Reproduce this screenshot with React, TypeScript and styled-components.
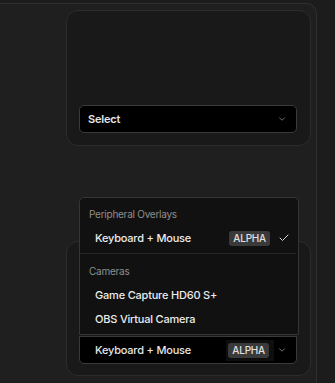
import React from "react";
import styled, { createGlobalStyle } from "styled-components";

const GlobalStyle = createGlobalStyle`
  html, body {
    margin: 0;
    padding: 0;
    background: #1c1c1c;
    font-family: Inter, "Noto Sans", sans-serif;
    -webkit-font-smoothing: antialiased;
  }
`;

interface Option {
  id: string;
  label: string;
  alpha?: boolean;
}

interface Group {
  title: string;
  options: Option[];
}

const groups: Group[] = [
  { title: "Peripheral Overlays", options: [{ id: "km", label: "Keyboard + Mouse", alpha: true }] },
  {
    title: "Cameras",
    options: [
      { id: "hd60", label: "Game Capture HD60 S+" },
      { id: "obs", label: "OBS Virtual Camera" },
    ],
  },
];

function Chevron() {
  return (
    <svg width="10" height="10" viewBox="0 0 24 24" fill="none" stroke="#858585" strokeWidth="2" strokeLinecap="round" strokeLinejoin="round">
      <path d="m6 9 6 6 6-6" />
    </svg>
  );
}

function Check() {
  return (
    <svg width="12" height="12" viewBox="0 0 24 24" fill="none" stroke="#d8d8d8" strokeWidth="2" strokeLinecap="round" strokeLinejoin="round">
      <path d="M20 6 9 17l-5-5" />
    </svg>
  );
}

function SourceMenu({ selected }: { selected: string }) {
  return (
    <Menu>
      {groups.map((group, i) => (
        <React.Fragment key={group.title}>
          {i > 0 && <Separator />}
          <GroupLabel>{group.title}</GroupLabel>
          {group.options.map(option => (
            <Item key={option.id}>
              <ItemText>{option.label}</ItemText>
              {option.alpha && <Badge>ALPHA</Badge>}
              <CheckSlot>{option.id === selected && <Check />}</CheckSlot>
            </Item>
          ))}
        </React.Fragment>
      ))}
    </Menu>
  );
}

function App() {
  return (
    <>
      <GlobalStyle />
      <Page>
        <Panel>
          <Card>
            <Trigger isPlaceholder>
              <TriggerText isPlaceholder>Select</TriggerText>
              <Chevron />
            </Trigger>
          </Card>
          <Card>
            <Anchor>
              <SourceMenu selected="km" />
              <Trigger>
                <TriggerText>Keyboard + Mouse</TriggerText>
                <BadgeWrap>
                  <Badge>ALPHA</Badge>
                </BadgeWrap>
                <Chevron />
              </Trigger>
            </Anchor>
          </Card>
        </Panel>
      </Page>
    </>
  );
}

const Page = styled.div`
  height: 383px;
  overflow: hidden;
  padding-top: 3px;
  box-sizing: border-box;
`;

const Panel = styled.div`
  margin-left: -20px;
  width: 337px;
  height: 420px;
  box-sizing: border-box;
  padding: 6px 5px 0 85px;
  background: #1f1f1f;
  border: 1px solid #2f2f2f;
  border-radius: 10px;
  display: flex;
  flex-direction: column;
  gap: 95px;
`;

const Card = styled.div`
  height: 136px;
  box-sizing: border-box;
  padding: 0 13px 12px 12px;
  background: #191919;
  border: 1px solid #2c2c2c;
  border-radius: 12px;
  display: flex;
  flex-direction: column;
  justify-content: flex-end;

  & + & {
    height: 135px;
    padding-bottom: 11px;
  }
`;

const Anchor = styled.div`
  position: relative;
`;

const Trigger = styled.div<{ isPlaceholder?: boolean }>`
  height: 28px;
  box-sizing: border-box;
  display: flex;
  align-items: center;
  padding: 0 9px 0 ${props => (props.isPlaceholder ? "8px" : "15px")};
  background: #000;
  border: 1px solid #3a3a3a;
  border-radius: ${props => (props.isPlaceholder ? "5px" : "0 0 5px 5px")};
  color: #e6e6e6;
`;

const TriggerText = styled.span<{ isPlaceholder?: boolean }>`
  flex: 1;
  font-size: 11px;
  font-weight: ${props => (props.isPlaceholder ? 600 : 500)};
  letter-spacing: -0.2px;
`;

const BadgeWrap = styled.div`
  display: flex;
  align-items: center;
  height: 21px;
  padding: 0 5px 0 2px;
  margin-right: 3px;
  background: #0e0e0e;
`;

const Menu = styled.div`
  position: absolute;
  left: 0;
  right: -2px;
  bottom: calc(100% + 1px);
  box-sizing: border-box;
  padding: 4px 0 3px;
  background: #111111;
  border: 1px solid #353535;
  border-radius: 5px 5px 0 0;
`;

const GroupLabel = styled.div`
  height: 24px;
  display: flex;
  align-items: center;
  padding-left: 9px;
  color: #8f8f8f;
  font-size: 10px;
  letter-spacing: -0.25px;
`;

const Item = styled.div`
  height: 24px;
  display: flex;
  align-items: center;
  padding: 0 7px 0 15px;
  color: #ececec;
`;

const ItemText = styled.span`
  flex: 1;
  font-size: 11px;
  font-weight: 500;
  letter-spacing: -0.2px;
`;

const CheckSlot = styled.div`
  width: 14px;
  margin-left: 7px;
  display: flex;
  justify-content: center;
`;

const Badge = styled.span`
  display: inline-flex;
  align-items: center;
  height: 15px;
  padding: 0 4px;
  border-radius: 3px;
  background: #3a3a3a;
  color: #e0e0e0;
  font-size: 10px;
  font-weight: 500;
  letter-spacing: -0.2px;
`;

const Separator = styled.div`
  height: 1px;
  margin: 3px 2px 5px 0;
  background: #262626;
`;

export default App;
